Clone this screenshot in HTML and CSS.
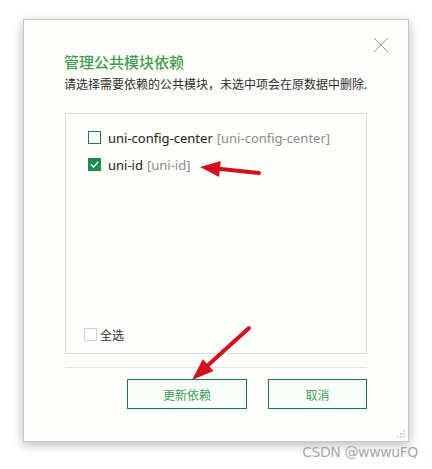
FILE: index.html
```html
<!DOCTYPE html>
<html lang="zh-CN">

<head>
    <meta charset="UTF-8">
    <meta name="viewport" content="width=device-width, initial-scale=1.0">
    <title>管理公共模块依赖</title>
    <link rel="stylesheet" href="styles.css">
</head>

<body>
    <main class="page">
        <div class="dialog">
            <button class="close" aria-label="关闭">
                <svg width="16" height="16" viewBox="0 0 16 16">
                    <path d="M1 1 L15 15 M15 1 L1 15" stroke="#9a9a9a" stroke-width="1" fill="none" />
                </svg>
            </button>

            <h1 class="title">管理公共模块依赖</h1>
            <p class="desc">请选择需要依赖的公共模块，未选中项会在原数据中删除.</p>

            <div class="modules">
                <ul class="module-list">
                    <li class="module">
                        <span class="check"></span>
                        <span class="name">uni-config-center</span>
                        <span class="path">[uni-config-center]</span>
                    </li>
                    <li class="module">
                        <span class="check checked">
                            <svg width="9" height="7" viewBox="0 0 9 7">
                                <path d="M1 3.5 L3.5 6 L8 1" stroke="#fff" stroke-width="1.4" fill="none" />
                            </svg>
                        </span>
                        <span class="name">uni-id</span>
                        <span class="path">[uni-id]</span>
                    </li>
                </ul>

                <label class="select-all">
                    <span class="check light"></span>
                    <span>全选</span>
                </label>
            </div>

            <div class="divider"></div>

            <div class="actions">
                <button class="btn">更新依赖</button>
                <button class="btn btn-cancel">取消</button>
            </div>

            <svg class="grip" width="10" height="10" viewBox="0 0 10 10">
                <rect x="8" y="2" width="1.5" height="1.5" fill="#c4c4c4" />
                <rect x="5" y="5" width="1.5" height="1.5" fill="#c4c4c4" />
                <rect x="8" y="5" width="1.5" height="1.5" fill="#c4c4c4" />
                <rect x="2" y="8" width="1.5" height="1.5" fill="#c4c4c4" />
                <rect x="5" y="8" width="1.5" height="1.5" fill="#c4c4c4" />
                <rect x="8" y="8" width="1.5" height="1.5" fill="#c4c4c4" />
            </svg>
        </div>

        <!-- red annotation arrows -->
        <svg class="marks" width="432" height="469" viewBox="0 0 432 469">
            <path d="M259 173 L216 168.6" stroke="#d4101c" stroke-width="4" stroke-linecap="round" />
            <polygon points="200,167 220.7,161 219.1,177" fill="#d4101c" />
            <path d="M249 328 L206 367" stroke="#d4101c" stroke-width="4" stroke-linecap="round" />
            <polygon points="192,380 213.6,371.1 202.8,359.3" fill="#d4101c" />
        </svg>

        <div class="watermark">CSDN @wwwuFQ</div>
    </main>
</body>

</html>
```

FILE: styles.css
```css
* {
    margin: 0;
    padding: 0;
    box-sizing: border-box;
}

body {
    font-family: "Noto Sans", "Noto Sans CJK SC", sans-serif;
    background: #fff;
    width: 432px;
    height: 469px;
    overflow: hidden;
}

.page {
    position: relative;
    width: 432px;
    height: 469px;
    padding: 19px 0 0 23px;
}

.dialog {
    position: relative;
    width: 386px;
    height: 423px;
    padding: 32px 41px 0 41px;
    background: #fdfdf9;
    border: 1px solid #c9c9c6;
    box-shadow: 0 3px 10px rgba(0, 0, 0, .28);
    display: flex;
    flex-direction: column;
}

.close {
    position: absolute;
    top: 17px;
    right: 19px;
    width: 16px;
    height: 16px;
    border: none;
    background: transparent;
    cursor: pointer;
    display: flex;
}

.title {
    font-family: "Noto Sans CJK SC", sans-serif;
    font-size: 15px;
    font-weight: 500;
    line-height: 20px;
    color: #3f9e4e;
    margin-left: -1px;
}

.desc {
    font-family: "Noto Sans CJK SC", sans-serif;
    font-size: 12px;
    line-height: 16px;
    color: #2f2f2f;
    margin-top: 4px;
    margin-left: -1px;
    margin-right: -10px;
    white-space: nowrap;
}

.modules {
    margin-top: 21px;
    height: 241px;
    border: 1px solid #dcdcd8;
    display: flex;
    flex-direction: column;
    padding: 10px 0 5px 0;
}

.module-list {
    list-style-type: none;
    padding-left: 22px;
}

.module {
    display: flex;
    align-items: center;
    height: 27px;
    font-size: 13px;
    color: #222;
}

.check {
    width: 13px;
    height: 13px;
    border: 1px solid #1e7c49;
    background: #fff;
    margin-right: 7px;
    display: flex;
    align-items: center;
    justify-content: center;
    flex-shrink: 0;
}

.check.checked {
    background: #1f8b4c;
    border-color: #1f8b4c;
}

.check.light {
    border-color: #cfcfcf;
    margin-right: 3px;
}

.path {
    color: #8c8c8c;
    margin-left: 4px;
}

.select-all {
    margin-top: auto;
    margin-left: 18px;
    height: 27px;
    display: flex;
    align-items: center;
    font-family: "Noto Sans CJK SC", sans-serif;
    font-size: 12px;
    color: #333;
}

.divider {
    height: 1px;
    background: #e2e2de;
    margin-top: 13px;
}

.actions {
    display: flex;
    justify-content: flex-end;
    gap: 21px;
    margin-top: 11px;
}

.btn {
    width: 120px;
    height: 30px;
    border: 1px solid #1c7a48;
    background: #f8fdf9;
    color: #3f9e5a;
    font-family: "Noto Sans CJK SC", sans-serif;
    font-size: 12px;
    cursor: pointer;
}

.btn-cancel {
    width: 99px;
}

.grip {
    position: absolute;
    right: 3px;
    bottom: 3px;
}

.marks {
    position: absolute;
    left: 0;
    top: 0;
    pointer-events: none;
}

.watermark {
    position: absolute;
    right: 14px;
    bottom: 9px;
    font-family: "DejaVu Sans", sans-serif;
    font-size: 14px;
    color: #a9a9a9;
    letter-spacing: -0.4px;
}
```
